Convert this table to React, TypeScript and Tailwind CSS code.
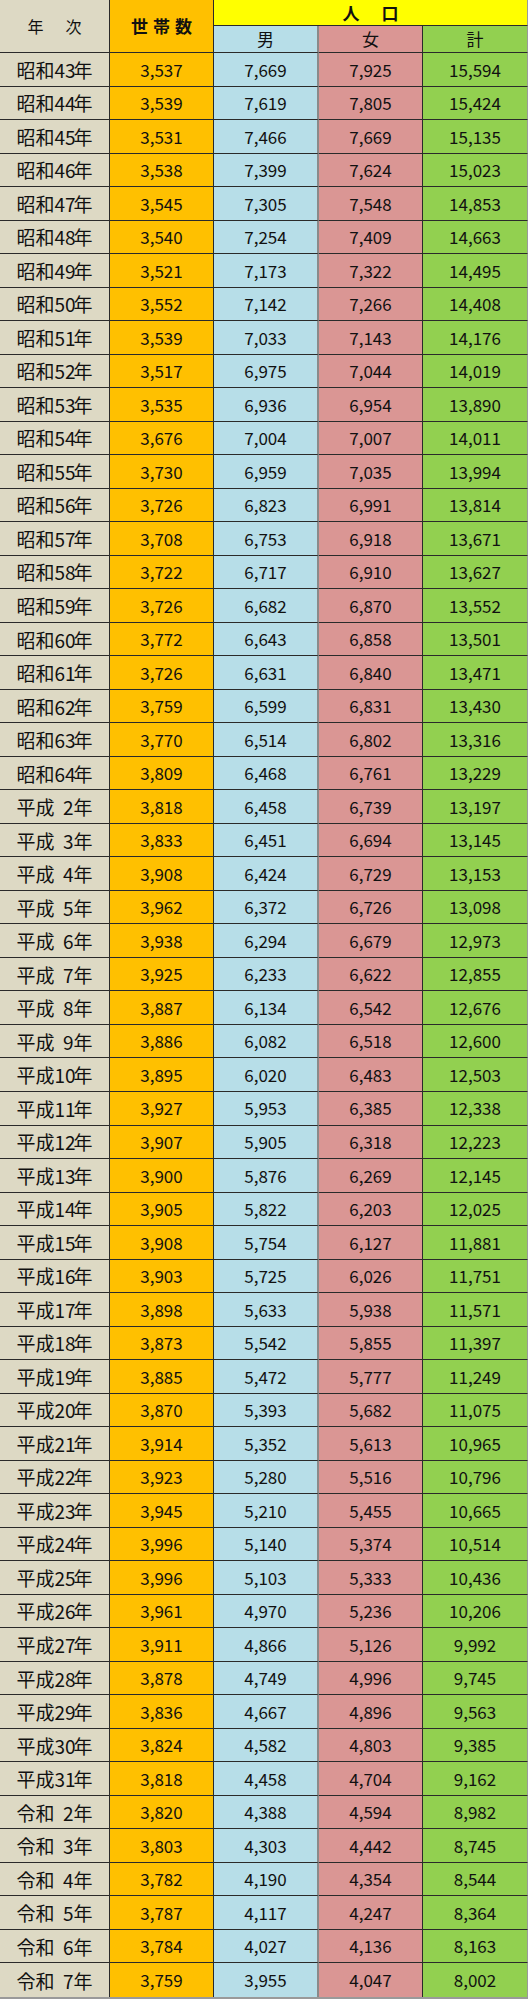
import React from 'react'

// era, year, households, male, female, total
const rows: [string, number, string, string, string, string][] = [
  ['昭和', 43, '3,537', '7,669', '7,925', '15,594'],
  ['昭和', 44, '3,539', '7,619', '7,805', '15,424'],
  ['昭和', 45, '3,531', '7,466', '7,669', '15,135'],
  ['昭和', 46, '3,538', '7,399', '7,624', '15,023'],
  ['昭和', 47, '3,545', '7,305', '7,548', '14,853'],
  ['昭和', 48, '3,540', '7,254', '7,409', '14,663'],
  ['昭和', 49, '3,521', '7,173', '7,322', '14,495'],
  ['昭和', 50, '3,552', '7,142', '7,266', '14,408'],
  ['昭和', 51, '3,539', '7,033', '7,143', '14,176'],
  ['昭和', 52, '3,517', '6,975', '7,044', '14,019'],
  ['昭和', 53, '3,535', '6,936', '6,954', '13,890'],
  ['昭和', 54, '3,676', '7,004', '7,007', '14,011'],
  ['昭和', 55, '3,730', '6,959', '7,035', '13,994'],
  ['昭和', 56, '3,726', '6,823', '6,991', '13,814'],
  ['昭和', 57, '3,708', '6,753', '6,918', '13,671'],
  ['昭和', 58, '3,722', '6,717', '6,910', '13,627'],
  ['昭和', 59, '3,726', '6,682', '6,870', '13,552'],
  ['昭和', 60, '3,772', '6,643', '6,858', '13,501'],
  ['昭和', 61, '3,726', '6,631', '6,840', '13,471'],
  ['昭和', 62, '3,759', '6,599', '6,831', '13,430'],
  ['昭和', 63, '3,770', '6,514', '6,802', '13,316'],
  ['昭和', 64, '3,809', '6,468', '6,761', '13,229'],
  ['平成', 2, '3,818', '6,458', '6,739', '13,197'],
  ['平成', 3, '3,833', '6,451', '6,694', '13,145'],
  ['平成', 4, '3,908', '6,424', '6,729', '13,153'],
  ['平成', 5, '3,962', '6,372', '6,726', '13,098'],
  ['平成', 6, '3,938', '6,294', '6,679', '12,973'],
  ['平成', 7, '3,925', '6,233', '6,622', '12,855'],
  ['平成', 8, '3,887', '6,134', '6,542', '12,676'],
  ['平成', 9, '3,886', '6,082', '6,518', '12,600'],
  ['平成', 10, '3,895', '6,020', '6,483', '12,503'],
  ['平成', 11, '3,927', '5,953', '6,385', '12,338'],
  ['平成', 12, '3,907', '5,905', '6,318', '12,223'],
  ['平成', 13, '3,900', '5,876', '6,269', '12,145'],
  ['平成', 14, '3,905', '5,822', '6,203', '12,025'],
  ['平成', 15, '3,908', '5,754', '6,127', '11,881'],
  ['平成', 16, '3,903', '5,725', '6,026', '11,751'],
  ['平成', 17, '3,898', '5,633', '5,938', '11,571'],
  ['平成', 18, '3,873', '5,542', '5,855', '11,397'],
  ['平成', 19, '3,885', '5,472', '5,777', '11,249'],
  ['平成', 20, '3,870', '5,393', '5,682', '11,075'],
  ['平成', 21, '3,914', '5,352', '5,613', '10,965'],
  ['平成', 22, '3,923', '5,280', '5,516', '10,796'],
  ['平成', 23, '3,945', '5,210', '5,455', '10,665'],
  ['平成', 24, '3,996', '5,140', '5,374', '10,514'],
  ['平成', 25, '3,996', '5,103', '5,333', '10,436'],
  ['平成', 26, '3,961', '4,970', '5,236', '10,206'],
  ['平成', 27, '3,911', '4,866', '5,126', '9,992'],
  ['平成', 28, '3,878', '4,749', '4,996', '9,745'],
  ['平成', 29, '3,836', '4,667', '4,896', '9,563'],
  ['平成', 30, '3,824', '4,582', '4,803', '9,385'],
  ['平成', 31, '3,818', '4,458', '4,704', '9,162'],
  ['令和', 2, '3,820', '4,388', '4,594', '8,982'],
  ['令和', 3, '3,803', '4,303', '4,442', '8,745'],
  ['令和', 4, '3,782', '4,190', '4,354', '8,544'],
  ['令和', 5, '3,787', '4,117', '4,247', '8,364'],
  ['令和', 6, '3,784', '4,027', '4,136', '8,163'],
  ['令和', 7, '3,759', '3,955', '4,047', '8,002'],
]

const cell = 'flex items-center justify-center border-b border-r border-[#2a2a2a]'

export default function App() {
  return (
    <div className="bg-white font-['Noto_Sans_CJK_JP',sans-serif] text-[#111]">
      <div className="grid w-[528px] grid-cols-[110px_104px_105px_104px_105px] grid-rows-[26px_27px_repeat(58,33.52px)] border-b-2 border-[#9a9a9a]">
        {/* header */}
        <div className={`${cell} row-span-2 bg-[#ddd9c4] text-[16px] tracking-[22px] pl-[22px]`}>年次</div>
        <div className={`${cell} row-span-2 bg-[#ffc000] text-[17px] font-bold tracking-[5px] pl-[5px]`}>世帯数</div>
        <div className={`${cell} col-span-3 bg-[#ffff00] !border-r-[#9a9a9a] text-[17px] font-bold tracking-[22px] pl-[22px]`}>
          人口
        </div>
        <div className={`${cell} bg-[#b7dee8] text-[17px] !border-r-2 !border-r-[#8a8a8a]`}>男</div>
        <div className={`${cell} bg-[#da9694] text-[17px]`}>女</div>
        <div className={`${cell} bg-[#92d050] text-[17px] !border-r-[#9a9a9a]`}>計</div>

        {/* data rows */}
        {rows.map(([era, year, households, male, female, total], i) => {
          const last = i === rows.length - 1
          const rb = last ? '!border-b-0' : ''
          return (
            <React.Fragment key={`${era}${year}`}>
              <div className={`${cell} ${rb} bg-[#ddd9c4] text-[19px] leading-none`}>
                <span>{era}</span>
                <span className="inline-block w-[19px] text-right">{year}</span>
                <span>年</span>
              </div>
              <div className={`${cell} ${rb} bg-[#ffc000] text-[17px]`}>{households}</div>
              <div className={`${cell} ${rb} bg-[#b7dee8] text-[17px] !border-r-2 !border-r-[#8a8a8a]`}>{male}</div>
              <div className={`${cell} ${rb} bg-[#da9694] text-[17px]`}>{female}</div>
              <div className={`${cell} ${rb} bg-[#92d050] text-[17px] !border-r-[#9a9a9a]`}>{total}</div>
            </React.Fragment>
          )
        })}
      </div>
    </div>
  )
}
